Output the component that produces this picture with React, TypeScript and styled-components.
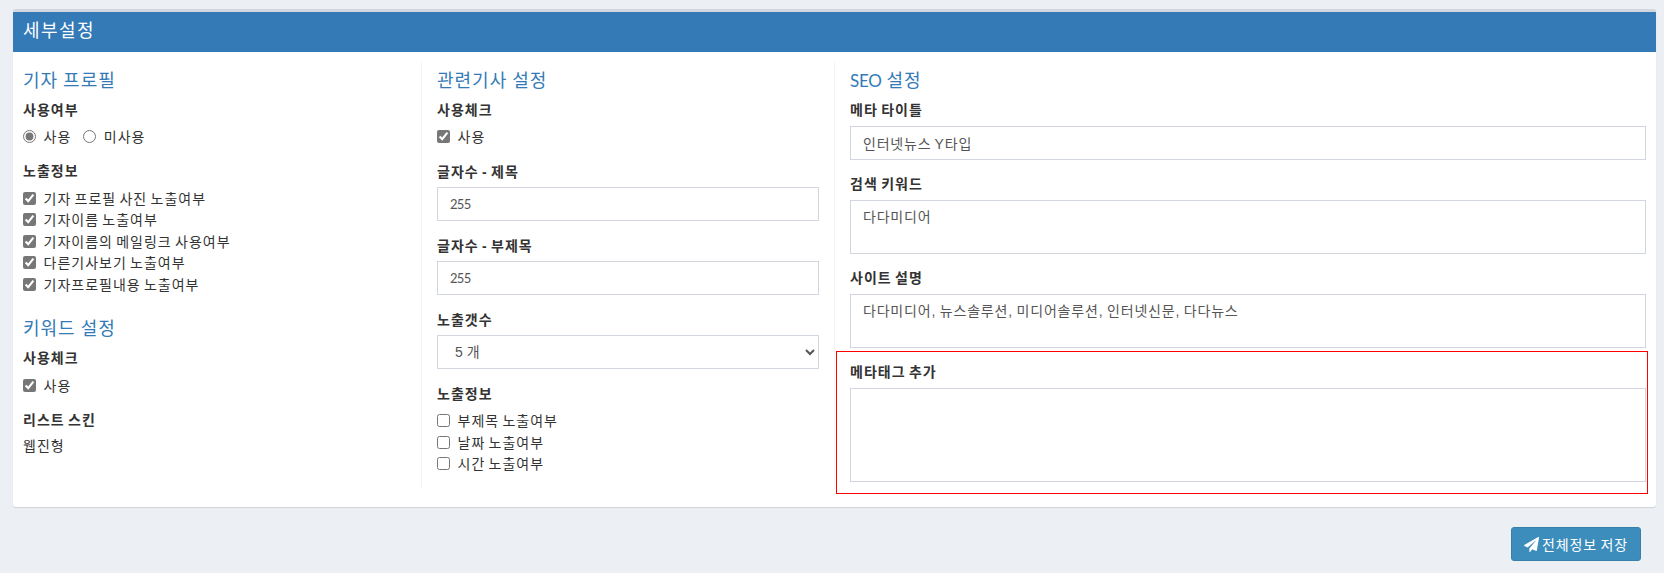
import React from "react";
import styled, { createGlobalStyle } from "styled-components";

const Global = createGlobalStyle`
  html, body { margin: 0; padding: 0; background: #ecf0f5; }
  body { font-family: "Liberation Sans", "Noto Sans CJK KR", sans-serif; font-size: 14px; color: #333; }
  * { box-sizing: border-box; }
`;

const Page = styled.div`
  padding: 9px 8px 12px 13px;
  height: 573px;
  overflow: hidden;
`;
const Card = styled.section`
  background: #fff;
  border-top: 3px solid #d2d6de;
  border-radius: 3px;
  box-shadow: 0 1px 1px rgba(0, 0, 0, 0.12);
`;
const CardHeader = styled.header`
  height: 40px;
  background: #337ab7;
  color: #fff;
  font-size: 18px;
  line-height: 39px;
  padding-left: 10px;
  letter-spacing: 1.4px;
`;
const CardBody = styled.div`
  display: grid;
  grid-template-columns: 408px 413px 1fr;
  padding: 10px 0 18px;
`;
const Column = styled.div<{ $divided?: boolean }>`
  height: 427px;
  padding: 8px 10px 0 ${(p) => (p.$divided ? 15 : 10)}px;
  border-left: ${(p) => (p.$divided ? "1px solid #f4f4f4" : "0")};
`;
const MiddleColumn = styled(Column)`
  padding-right: 15px;
`;
const Heading = styled.h4<{ $top?: number }>`
  margin: ${(p) => p.$top ?? 0}px 0 8px;
  font-size: 18px;
  font-weight: 400;
  line-height: 22px;
  color: #337ab7;
  letter-spacing: 1px;
  word-spacing: -1px;
`;
const Latin = styled.span`
  font-family: Lato, "Liberation Sans", sans-serif;
  font-size: 17px;
  letter-spacing: -0.3px;
`;
const Group = styled.div<{ $gap?: number }>`
  margin-bottom: ${(p) => p.$gap ?? 15}px;
`;
const Label = styled.div<{ $gap?: number }>`
  font-weight: 700;
  font-size: 14px;
  line-height: 20px;
  margin-bottom: ${(p) => p.$gap ?? 5}px;
  letter-spacing: 1px;
  word-spacing: -1.5px;
`;
const OptionRow = styled.div`
  display: flex;
  gap: 12px;
  height: 21px;
  align-items: center;
`;
const Stack = styled.div`
  padding-top: 1px;
`;
const Option = styled.label`
  display: flex;
  align-items: center;
  height: 21.5px;
  font-size: 14px;
  letter-spacing: 1px;
  word-spacing: -1.6px;
  color: #333;
`;
const Box = styled.input`
  width: 13px;
  height: 13px;
  margin: 1px 7.5px 0 0;
  accent-color: #777;
`;
const Plain = styled.div`
  font-size: 14px;
  line-height: 20px;
  letter-spacing: 1px;
`;
const Field = styled.input`
  display: block;
  width: 100%;
  height: 34px;
  padding: 0 12px;
  border: 1px solid #d2d6de;
  background: #fff;
  color: #555;
  font: inherit;
  font-size: 14px;
  letter-spacing: 0.8px;
  word-spacing: -1.5px;
  outline: none;
`;
const NumberField = styled(Field)`
  font-family: Lato, "Liberation Sans", sans-serif;
  font-size: 13px;
  letter-spacing: -0.7px;
`;
const Picker = styled.select`
  display: block;
  width: 100%;
  height: 34px;
  padding: 0 13px;
  border: 1px solid #d2d6de;
  border-radius: 0;
  background: #fff;
  color: #555;
  font: inherit;
  font-size: 14px;
  outline: none;
`;
const Area = styled.textarea<{ $h: number }>`
  display: block;
  width: 100%;
  height: ${(p) => p.$h}px;
  padding: 6px 12px;
  border: 1px solid #d2d6de;
  color: #555;
  font: inherit;
  font-size: 14px;
  line-height: 20px;
  letter-spacing: 0.8px;
  word-spacing: -1px;
  resize: none;
  outline: none;
`;
const Highlight = styled.div`
  margin: -11px -2px 0 -14px;
  padding: 10px 1px 11px 13px;
  border: 1px solid #f00;
`;
const Footer = styled.div`
  display: flex;
  justify-content: flex-end;
  padding: 20px 15px 0 0;
`;
const SaveButton = styled.button`
  display: flex;
  align-items: center;
  gap: 3px;
  width: 130px;
  height: 34px;
  justify-content: center;
  background: #3c8dbc;
  border: 1px solid #367fa9;
  border-radius: 3px;
  color: #fff;
  font: inherit;
  font-size: 14px;
  letter-spacing: 0.8px;
  word-spacing: -1px;
  padding: 0;
`;

const SendIcon = () => (
  <svg width="15" height="15" viewBox="0 0 1792 1792" fill="currentColor" aria-hidden="true">
    <path d="M1764 11q33 24 27 64l-256 1536q-5 29-32 45-14 8-31 8-11 0-24-5l-453-185-242 295q-18 23-49 23-13 0-22-4-19-7-30.500-23.500t-11.500-36.500v-349l864-1059-1069 925-395-162q-37-14-40-55-2-40 32-59l1664-960q15-9 32-9 20 0 36 11z" />
  </svg>
);

const Check = ({ text, on }: { text: string; on?: boolean }) => (
  <Option>
    <Box type="checkbox" defaultChecked={on} />
    {text}
  </Option>
);

export default function App() {
  return (
    <Page>
      <Global />
      <Card>
        <CardHeader>세부설정</CardHeader>
        <CardBody>
          <Column>
            <Heading>기자 프로필</Heading>
            <Group>
              <Label>사용여부</Label>
              <OptionRow>
                <Option>
                  <Box type="radio" name="use" defaultChecked />
                  사용
                </Option>
                <Option>
                  <Box type="radio" name="use" />
                  미사용
                </Option>
              </OptionRow>
            </Group>
            <Label>노출정보</Label>
            <Stack>
              <Check on text="기자 프로필 사진 노출여부" />
              <Check on text="기자이름 노출여부" />
              <Check on text="기자이름의 메일링크 사용여부" />
              <Check on text="다른기사보기 노출여부" />
              <Check on text="기자프로필내용 노출여부" />
            </Stack>
            <Heading $top={23}>키워드 설정</Heading>
            <Group $gap={14}>
              <Label $gap={7}>사용체크</Label>
              <Option>
                <Box type="checkbox" defaultChecked />
                사용
              </Option>
            </Group>
            <Label $gap={6}>리스트 스킨</Label>
            <Plain>웹진형</Plain>
          </Column>
          <MiddleColumn $divided>
            <Heading>관련기사 설정</Heading>
            <Group>
              <Label>사용체크</Label>
              <Option>
                <Box type="checkbox" defaultChecked />
                사용
              </Option>
            </Group>
            <Group>
              <Label>글자수 - 제목</Label>
              <NumberField defaultValue="255" />
            </Group>
            <Group>
              <Label>글자수 - 부제목</Label>
              <NumberField defaultValue="255" />
            </Group>
            <Group>
              <Label>노출갯수</Label>
              <Picker defaultValue="5">
                <option value="5">5 개</option>
              </Picker>
            </Group>
            <Label>노출정보</Label>
            <Stack>
              <Check text="부제목 노출여부" />
              <Check text="날짜 노출여부" />
              <Check text="시간 노출여부" />
            </Stack>
          </MiddleColumn>
          <Column $divided>
            <Heading>
              <Latin>SEO</Latin> 설정
            </Heading>
            <Group $gap={14}>
              <Label $gap={6}>메타 타이틀</Label>
              <Field defaultValue="인터넷뉴스 Y타입" />
            </Group>
            <Group $gap={14}>
              <Label $gap={6}>검색 키워드</Label>
              <Area $h={54} defaultValue="다다미디어" />
            </Group>
            <Group $gap={14}>
              <Label $gap={6}>사이트 설명</Label>
              <Area $h={54} defaultValue="다다미디어, 뉴스솔루션, 미디어솔루션, 인터넷신문, 다다뉴스" />
            </Group>
            <Highlight>
              <Label $gap={6}>메타태그 추가</Label>
              <Area $h={94} />
            </Highlight>
          </Column>
        </CardBody>
      </Card>
      <Footer>
        <SaveButton>
          <SendIcon />
          전체정보 저장
        </SaveButton>
      </Footer>
    </Page>
  );
}
